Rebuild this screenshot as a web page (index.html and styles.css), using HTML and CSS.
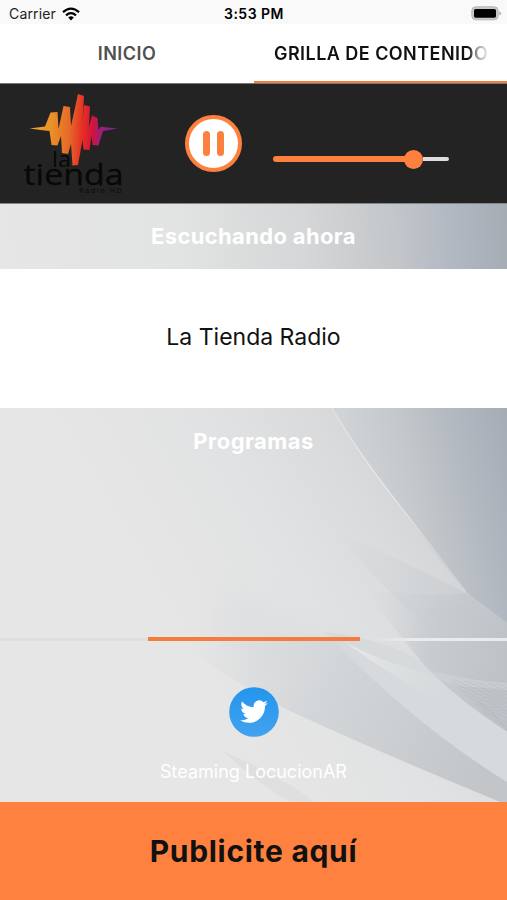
FILE: index.html
```html
<!DOCTYPE html>
<html lang="es">
<head>
<meta charset="utf-8">
<title>La Tienda Radio</title>
<link rel="stylesheet" href="styles.css">
</head>
<body>
<div class="app">
  <header class="status">
    <div class="carrier"><span class="carrier-name">Carrier</span>
      <svg class="wifi" viewBox="0 0 18 14"><g fill="none" stroke="#000" stroke-width="2.3"><path d="M1 5.1Q9-1.9 17 5.1"/><path d="M4 8.3Q9 4 14 8.3"/></g><path d="M6.2 10.5Q9 8.2 11.8 10.5L9 13.5Z"/></svg>
    </div>
    <div class="clock"><span>3:53 PM</span></div>
    <div class="battery"><svg width="31" height="15" viewBox="0 0 31 15"><rect x=".8" y=".8" width="26.4" height="13" rx="4" fill="#c9c9c6" stroke="#b5b5b2"/><rect x="3" y="3" width="22" height="8.7" rx="1.6"/><path d="M28.3 5Q32 7.3 28.3 9.6Z" fill="#b2b2af"/></svg></div>
  </header>
  <nav class="tabs">
    <div class="tab"><span class="tab-one">INICIO</span></div>
    <div class="tab active"><span class="tab-two">GRILLA DE CONTENIDO</span></div>
  </nav>
  <section class="player">
    <svg class="logo" viewBox="0 0 130 119">
      <defs><linearGradient id="wave" gradientUnits="userSpaceOnUse" x1="30" x2="117" y1="40" y2="44"><stop stop-color="#f3a529"/><stop offset=".25" stop-color="#e89127"/><stop offset=".46" stop-color="#e66829"/><stop offset=".6" stop-color="#e53124"/><stop offset=".72" stop-color="#d3133b"/><stop offset=".82" stop-color="#992078"/><stop offset="1" stop-color="#7a2692"/></linearGradient></defs>
      <path fill="url(#wave)" d="M29.500 44.500L45 42.500L50.500 28.500L57.500 28L58.500 45L63.500 22L70 23L71 42L78 10L84 12L82.500 38L84 21L90 22.500L89 43L92 31.500L97.500 34L98.500 46L100.500 42.800L117.500 44.500L103 47L98.500 61.500L92.500 61L91.500 52L89.500 66L83.500 65.500L82.500 56L78 81L72.500 81.500L71 60L68 70L62 69L61 52L57.500 61.500L51.500 61L49.500 47L44.500 46.500Z"/>
      <g fill="#080808" font-family="Open Sans, sans-serif"><text x="52" y="83" font-size="21" textLength="19" lengthAdjust="spacingAndGlyphs">la</text><text x="23.500" y="101" font-size="29.500" stroke="#080808" stroke-width=".3" textLength="100" lengthAdjust="spacingAndGlyphs">tienda</text><text x="79" y="109" font-size="7.500" textLength="43">Radio HD</text></g>
    </svg>
    <div class="pause"><i></i><i></i></div>
    <div class="volume"><span class="level"></span><span class="knob"></span><span class="rest"></span></div>
  </section>
  <main class="content">
    <svg class="backdrop" viewBox="0 203 507 599" preserveAspectRatio="none">
      <defs>
        <linearGradient id="base" gradientUnits="userSpaceOnUse" x1="0" y1="230" x2="507" y2="203"><stop stop-color="#e6e6e6"/><stop offset=".35" stop-color="#e2e3e3"/><stop offset=".6" stop-color="#d4d6d7"/><stop offset=".77" stop-color="#c4c7ca"/><stop offset=".88" stop-color="#b3b9c3"/><stop offset="1" stop-color="#a5acb4"/></linearGradient>
        <linearGradient id="sheet" gradientUnits="userSpaceOnUse" x1="170" y1="610" x2="440" y2="450"><stop stop-color="#e6e6e6"/><stop offset=".4" stop-color="#e1e2e3"/><stop offset=".7" stop-color="#d9dbdd"/><stop offset="1" stop-color="#cdd0d2"/></linearGradient>
        <linearGradient id="top" gradientUnits="userSpaceOnUse" x1="340" y1="450" x2="507" y2="410"><stop stop-color="#d2d5d7"/><stop offset=".35" stop-color="#c5c9cb"/><stop offset=".68" stop-color="#b3b9c1"/><stop offset="1" stop-color="#a5acb6"/></linearGradient>
        <linearGradient id="shade" gradientUnits="userSpaceOnUse" x1="190" y1="650" x2="480" y2="780"><stop stop-color="#d7d9db" stop-opacity="0"/><stop offset=".4" stop-color="#d4d7d9"/><stop offset="1" stop-color="#c2c6c9"/></linearGradient>
        <linearGradient id="fan" gradientUnits="userSpaceOnUse" x1="360" y1="620" x2="507" y2="650"><stop stop-color="#d4d7da" stop-opacity="0"/><stop offset=".5" stop-color="#c9cdd0"/><stop offset="1" stop-color="#bfc3c8"/></linearGradient>
        <linearGradient id="veil" gradientUnits="userSpaceOnUse" x1="330" y1="520" x2="490" y2="600"><stop stop-color="#d3d6d8" stop-opacity="0"/><stop offset="1" stop-color="#c9cdd0"/></linearGradient>
        <linearGradient id="glow" gradientUnits="userSpaceOnUse" x1="345" y1="642" x2="450" y2="690"><stop stop-color="#e8eaeb"/><stop offset="1" stop-color="#dcdfe0" stop-opacity="0"/></linearGradient>
        <linearGradient id="ray" x1="0" y1="0" x2="0" y2="1"><stop stop-color="#e8eaeb" stop-opacity=".6"/><stop offset=".35" stop-color="#e6e9eb"/><stop offset=".65" stop-color="#d7dbde" stop-opacity=".7"/><stop offset="1" stop-color="#d2d6d9" stop-opacity=".3"/></linearGradient>
        <pattern id="mesh" width="3" height="3" patternUnits="userSpaceOnUse" patternTransform="rotate(52)"><path d="M0 1.500H3" stroke="#b3b8bd" stroke-width=".6" opacity=".3"/></pattern>
        <pattern id="waves" width="8" height="3.500" patternUnits="userSpaceOnUse" patternTransform="rotate(24)"><path d="M0 2Q2 .6 4 2T8 2" fill="none" stroke="#a7adb2" stroke-width=".7" opacity=".5"/></pattern>
        <filter id="soft" x="-30%" y="-30%" width="160%" height="160%"><feGaussianBlur stdDeviation="12"/></filter>
        <filter id="edge"><feGaussianBlur stdDeviation=".7"/></filter>
      </defs>
      <rect y="203" width="507" height="66" fill="url(#base)"/>
      <rect y="408" width="507" height="394" fill="url(#sheet)"/>
      <path filter="url(#soft)" fill="#d9dbde" opacity=".5" d="M230 590L350 638L405 690L300 680L210 630Z"/>
      <path fill="url(#veil)" d="M335 530Q400 560 467 593L520 632V700Q395 610 335 530Z"/>
      <path fill="url(#top)" d="M332 408H507V624Q481 606 467 593Q431 550 408 516Q361 455 332 408Z"/>
      <path fill="none" stroke="url(#ray)" stroke-width="1.300" d="M332 408Q361 458 408 516Q439 557 467 593L503 637"/>
      <g filter="url(#edge)">
        <path fill="url(#shade)" d="M180 643L350 640Q425 690 520 790V810Q390 757 292 712Q237 685 180 643Z"/>
        <path fill="#d7dadc" d="M325 632Q400 640 450 680L520 745V790Q416 728 325 632Z"/>
        <path fill="url(#glow)" d="M345 642Q390 667 450 677V705Q395 680 345 642Z"/>
        <path fill="url(#fan)" d="M365 590L408 645Q440 690 520 740V632L467 593Q430 598 365 590Z"/>
        <path fill="#d5d8da" opacity=".45" d="M400 663Q460 680 507 683V690L452 685Z"/>
      </g>
      <path fill="url(#mesh)" d="M417 609L475 601L507 630V683Q460 678 432 670L410 640Z"/>
      <path fill="url(#waves)" d="M450 680L507 684V730Q477 710 450 680Z"/>
      <path fill="none" stroke="#adb4b8" stroke-width="1" opacity=".6" d="M478 702Q492 710 507 730"/>
      <path filter="url(#edge)" fill="#cbced0" opacity=".25" d="M222 751Q275 772 315 802H290Q260 785 222 751Z"/>
    </svg>
    <div class="listening"><h2 class="now">Escuchando ahora</h2></div>
    <div class="station"><span>La Tienda Radio</span></div>
    <div class="programs">
      <h2 class="prog">Programas</h2>
      <div class="divider"><span></span><b></b><i></i></div>
      <svg class="twitter" viewBox="0 0 50 50"><defs><linearGradient id="blue" x2="0" y2="1"><stop stop-color="#2395ed"/><stop offset="1" stop-color="#42a2ef"/></linearGradient></defs><circle cx="25" cy="25" r="24.800" fill="url(#blue)"/><path transform="translate(11.2 10.8) scale(1.15)" fill="#fff" d="M23.95 4.57a10 10 0 0 1-2.82.77 4.96 4.96 0 0 0 2.16-2.72c-.95.55-2 .95-3.13 1.18a4.92 4.92 0 0 0-8.38 4.48C7.69 8.1 4.07 6.13 1.64 3.16a4.82 4.82 0 0 0-.67 2.48c0 1.71.87 3.21 2.19 4.1a4.9 4.9 0 0 1-2.23-.62v.06a4.92 4.92 0 0 0 3.95 4.83 5 5 0 0 1-2.21.08 4.94 4.94 0 0 0 4.6 3.42A9.87 9.87 0 0 1 0 19.54a13.99 13.99 0 0 0 7.55 2.21c9.05 0 14-7.5 14-13.98 0-.21 0-.42-.02-.63a9.94 9.94 0 0 0 2.42-2.57Z"/></svg>
      <div class="credit"><span>Steaming LocucionAR</span></div>
    </div>
  </main>
  <footer class="ad"><span>Publicite aquí</span></footer>
</div>
</body>
</html>
```
FILE: styles.css
```css
* { box-sizing: border-box; }
body { margin: 0; font-family: Inter, "Liberation Sans", sans-serif; background: #fff; }
h2 { margin: 0; }
.app { width: 507px; height: 900px; display: flex; flex-direction: column; overflow: hidden; }
.status { height: 24px; background: #f9f9f9; display: grid; grid-template-columns: 1fr auto 1fr; align-items: center; padding: 3px 5px 0 9px; flex: none; }
.carrier { display: flex; align-items: center; gap: 6px; font-size: 14px; color: #222; letter-spacing: .15px; }
.wifi { width: 18px; height: 14px; }
.clock { font-size: 14px; font-weight: 600; letter-spacing: .5px; margin-right: 3px; }
.battery { display: flex; justify-content: flex-end; }
.tabs { height: 60px; display: grid; grid-template-columns: 254px 253px; flex: none; border-bottom: 1px solid #777; }
.tab { display: flex; align-items: center; justify-content: center; font-size: 18px; font-weight: 600; letter-spacing: .45px; color: #505050; white-space: nowrap; padding-bottom: 1px; }
.active { color: #111; border-bottom: 2px solid #f77d3f; justify-content: flex-start; padding: 1px 0 0 20px; }
.tab-two { background: linear-gradient(90deg, #111 194px, #999 203px, #eee 214px); background-clip: text; color: transparent; }
.player { height: 119px; flex: none; background: #232323; display: flex; align-items: center; }
.logo { width: 130px; height: 119px; margin-right: 55px; }
.pause { width: 57px; height: 57px; border: 4px solid #fe803f; border-radius: 50%; background: #fff; display: flex; align-items: center; justify-content: center; gap: 7px; }
.pause i { width: 7px; height: 25px; border-radius: 4px; background: #fe803f; }
.volume { width: 176px; height: 20px; margin: 31px 0 0 31px; display: flex; align-items: center; }
.level { width: 132px; height: 6px; border-radius: 3px 0 0 3px; background: #fe803f; }
.knob { width: 19px; height: 19px; border-radius: 50%; background: #fe803f; margin-left: -1px; }
.rest { flex: 1; height: 4px; background: #ddd; border-radius: 0 2px 2px 0; }
.content { position: relative; isolation: isolate; height: 599px; flex: none; }
.backdrop { position: absolute; inset: 0; width: 100%; height: 100%; z-index: -1; }
.listening { height: 66px; display: flex; align-items: center; justify-content: center; padding-bottom: 2px; border-top: 1px solid #85888a; }
.now, .prog { font-size: 22px; line-height: 28px; font-weight: 700; color: #fff; letter-spacing: .35px; }
.prog { letter-spacing: .45px; }
.station { height: 139px; background: #fff; display: flex; align-items: center; justify-content: center; font-size: 23px; color: #111; padding-bottom: 4px; }
.programs { height: 394px; display: flex; flex-direction: column; align-items: center; padding-top: 19px; }
.divider { width: 100%; height: 4px; margin-top: 182px; display: grid; grid-template-columns: 148px 212px 1fr; align-items: center; }
.divider span { height: 3px; background: #dfdfdf; }
.divider b { height: 4px; background: #f57c3e; }
.divider i { height: 3px; background: linear-gradient(90deg, transparent 10px, #e9ebec 50px); }
.twitter { width: 50px; height: 50px; margin-top: 46px; }
.credit { margin-top: 23px; font-size: 18px; line-height: 24px; color: #fff; }
.ad { height: 98px; background: #ff813f; display: flex; align-items: center; justify-content: center; font-size: 30px; font-weight: 700; letter-spacing: .7px; color: #111; }
```
